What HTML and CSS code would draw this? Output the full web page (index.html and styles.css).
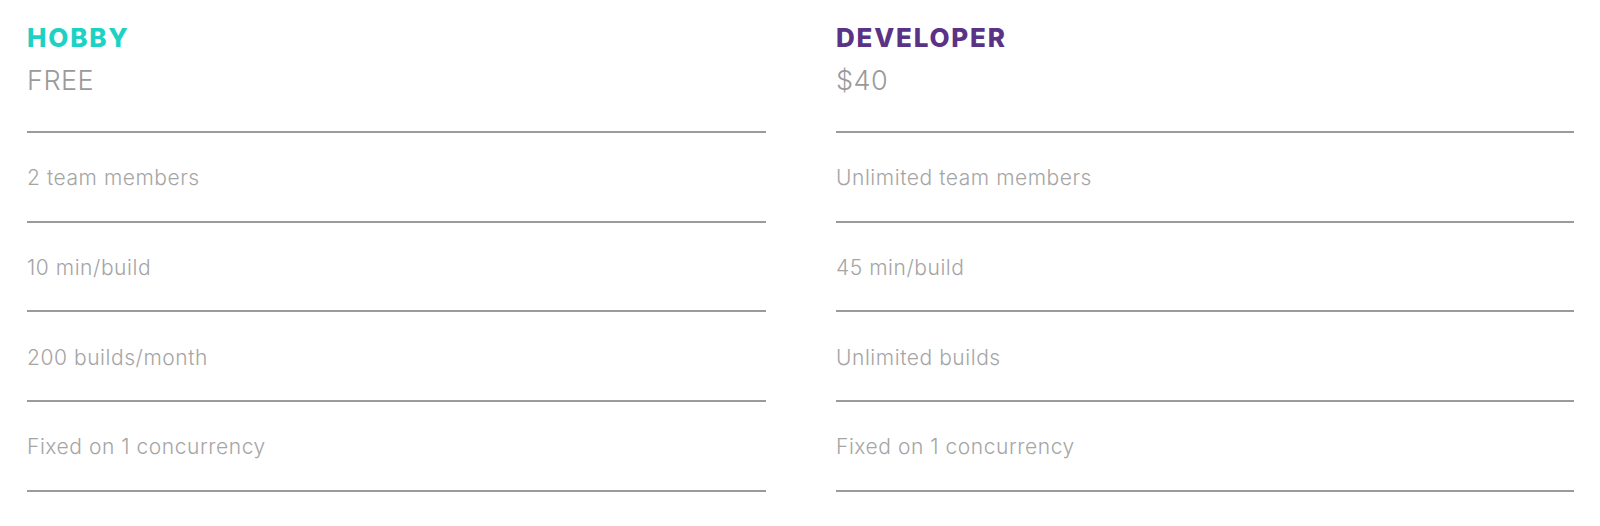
FILE: index.html
```html
<!DOCTYPE html>
<html lang="en">
<head>
<meta charset="utf-8">
<title>Pricing</title>
<link rel="stylesheet" href="styles.css">
</head>
<body>
<div class="plans">
  <section class="plan">
    <h2 class="plan-name plan-name--hobby">HOBBY</h2>
    <div class="plan-price">FREE</div>
    <ul class="features">
      <li>2 team members</li>
      <li>10 min/build</li>
      <li>200 builds/month</li>
      <li>Fixed on 1 concurrency</li>
    </ul>
  </section>
  <section class="plan">
    <h2 class="plan-name plan-name--dev">DEVELOPER</h2>
    <div class="plan-price">$40</div>
    <ul class="features">
      <li>Unlimited team members</li>
      <li>45 min/build</li>
      <li>Unlimited builds</li>
      <li>Fixed on 1 concurrency</li>
    </ul>
  </section>
</div>
</body>
</html>
```
FILE: styles.css
```css
html, body {
  margin: 0;
  padding: 0;
  background: #fff;
}
body {
  font-family: "Inter", "Lato", sans-serif;
}
.plans {
  display: grid;
  grid-template-columns: 739px 738px;
  column-gap: 70px;
  padding: 23px 26px 0 27px;
}
.plan {
  display: flex;
  flex-direction: column;
}
.plan-name {
  margin: 0;
  font-size: 26px;
  line-height: 30px;
  font-weight: 800;
  letter-spacing: 1.8px;
}
.plan-name--hobby { color: #1dd2c4; }
.plan-name--dev { color: #5a3386; }
.plan-price {
  margin-top: 11px;
  font-size: 27px;
  line-height: 34px;
  font-weight: 300;
  letter-spacing: 0.5px;
  color: #9a9a9a;
}
.features {
  list-style: none;
  margin: 33px 0 0;
  padding: 0;
  border-top: 2px solid #9b9b9b;
}
.features li {
  display: flex;
  align-items: center;
  box-sizing: border-box;
  height: 89.7px;
  padding-top: 2px;
  border-bottom: 2px solid #9b9b9b;
  font-size: 21px;
  font-weight: 300;
  letter-spacing: 0.55px;
  color: #a5a5a5;
}
```
